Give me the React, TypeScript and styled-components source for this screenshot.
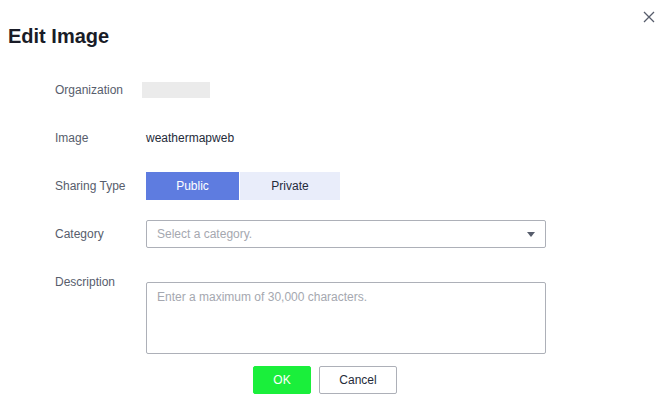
import React from "react"
import styled, { createGlobalStyle } from "styled-components"

const GlobalStyle = createGlobalStyle`
  body {
    margin: 0;
    background: #fff;
    font-family: "Liberation Sans", Arial, sans-serif;
  }
`

const Dialog = styled.div`
  position: relative;
  width: 661px;
  height: 406px;
  box-sizing: border-box;
  padding: 22px 0 0 8px;
  background: #fff;
`

const Title = styled.h2`
  margin: 0 0 26px;
  font-size: 20px;
  line-height: 28px;
  font-weight: bold;
  color: #191c27;
`

const CloseButton = styled.button`
  position: absolute;
  top: 11px;
  right: 6px;
  width: 12px;
  height: 12px;
  padding: 0;
  border: none;
  background: none;
  cursor: pointer;
  svg {
    display: block;
  }
`

const Form = styled.div`
  margin-left: 47px;
  display: grid;
  grid-template-columns: 91px 400px;
  grid-template-rows: repeat(4, 28px) auto;
  row-gap: 20px;
  align-items: center;
`

const Label = styled.div<{ $top?: boolean }>`
  font-size: 12px;
  color: #575d6c;
  line-height: 28px;
  align-self: ${(p) => (p.$top ? "start" : "center")};
`

const Value = styled.div`
  font-size: 12px;
  color: #252b3a;
`

const Blurred = styled.div`
  width: 68px;
  height: 16px;
  margin-left: -4px;
  background: #ebebeb;
  filter: blur(0.6px);
`

const Toggle = styled.div`
  display: flex;
  gap: 1px;
  height: 28px;
`

const ToggleItem = styled.button<{ $active?: boolean }>`
  height: 28px;
  width: ${(p) => (p.$active ? "93px" : "100px")};
  border: none;
  padding: 0;
  font-family: inherit;
  font-size: 12px;
  background: ${(p) => (p.$active ? "#5e7ce0" : "#e9edfa")};
  color: ${(p) => (p.$active ? "#fff" : "#252b3a")};
`

const Select = styled.div`
  position: relative;
  height: 28px;
  box-sizing: border-box;
  border: 1px solid #adb0b8;
  border-radius: 2px;
  padding: 0 10px;
  display: flex;
  align-items: center;
  font-size: 12px;
  color: #a5a8b0;
`

const Caret = styled.span`
  position: absolute;
  right: 10px;
  top: 11px;
  width: 0;
  height: 0;
  border-left: 4px solid transparent;
  border-right: 4px solid transparent;
  border-top: 5px solid #575d6c;
`

const TextArea = styled.div`
  align-self: start;
  margin-top: 14px;
  height: 72px;
  box-sizing: border-box;
  border: 1px solid #adb0b8;
  border-radius: 2px;
  padding: 7px 10px;
  font-size: 12px;
  color: #a5a8b0;
`

const Actions = styled.div`
  display: flex;
  gap: 8px;
  margin: 12px 0 0 245px;
`

const Button = styled.button<{ $primary?: boolean }>`
  height: 28px;
  box-sizing: border-box;
  min-width: ${(p) => (p.$primary ? "58px" : "78px")};
  border-radius: 2px;
  border: 1px solid ${(p) => (p.$primary ? "#1aef3b" : "#adb0b8")};
  background: ${(p) => (p.$primary ? "#1aef3b" : "#fff")};
  color: ${(p) => (p.$primary ? "#fff" : "#252b3a")};
  font-family: inherit;
  font-size: 12px;
  padding: 0;
`

export default function App() {
  return (
    <>
      <GlobalStyle />
      <Dialog>
        <CloseButton aria-label="Close">
          <svg width="12" height="12" viewBox="0 0 12 12">
            <path d="M1 1 L11 11 M11 1 L1 11" stroke="#575d6c" strokeWidth="1.3" />
          </svg>
        </CloseButton>
        <Title>Edit Image</Title>
        <Form>
          <Label>Organization</Label>
          <Blurred />
          <Label>Image</Label>
          <Value>weathermapweb</Value>
          <Label>Sharing Type</Label>
          <Toggle>
            <ToggleItem $active>Public</ToggleItem>
            <ToggleItem>Private</ToggleItem>
          </Toggle>
          <Label>Category</Label>
          <Select>
            Select a category.
            <Caret />
          </Select>
          <Label $top>Description</Label>
          <TextArea>Enter a maximum of 30,000 characters.</TextArea>
        </Form>
        <Actions>
          <Button $primary>OK</Button>
          <Button>Cancel</Button>
        </Actions>
      </Dialog>
    </>
  )
}
